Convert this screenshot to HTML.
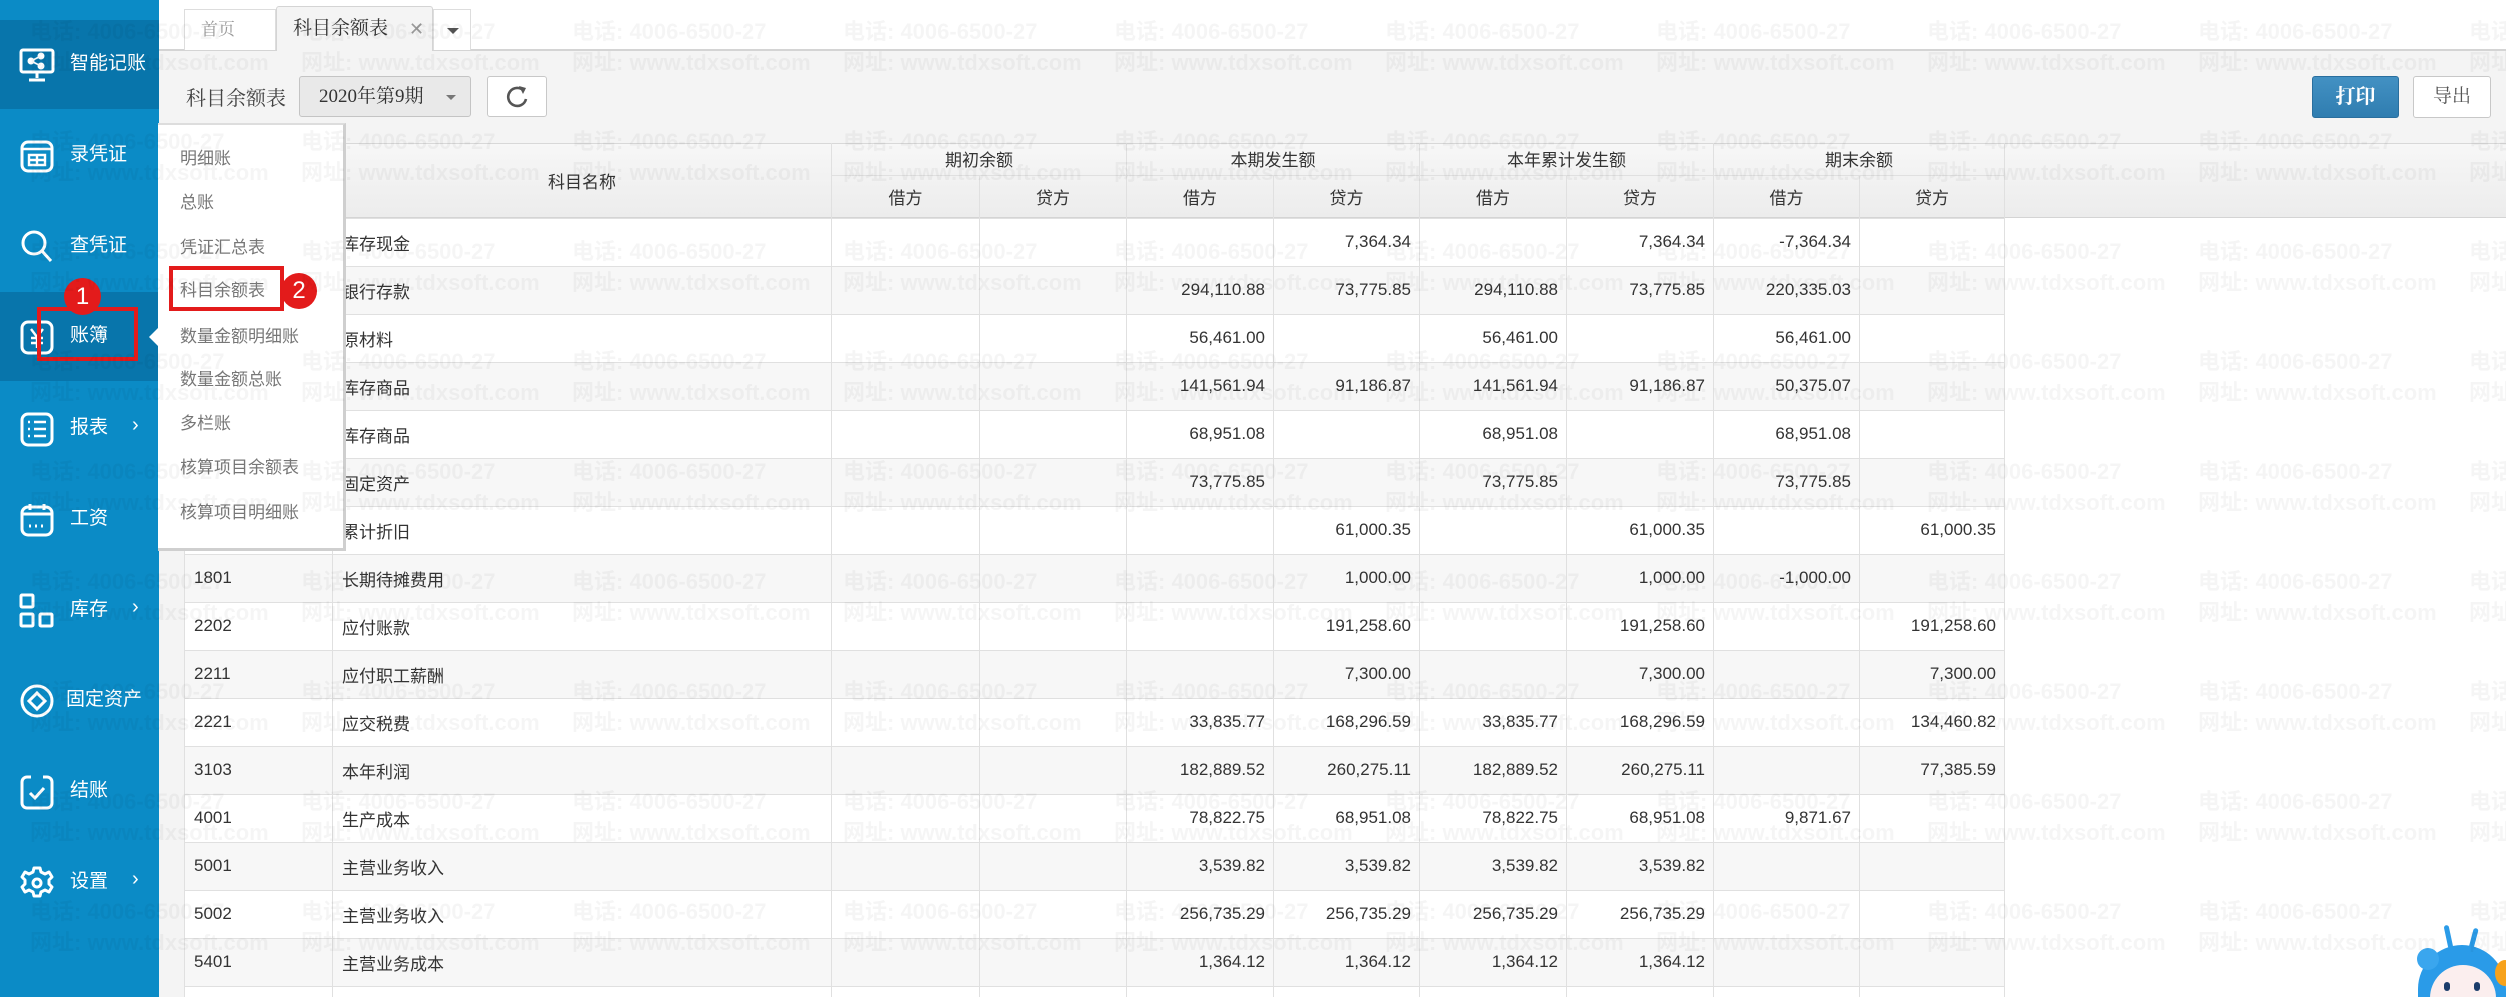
<!DOCTYPE html>
<html><head><meta charset="utf-8">
<style>
*{margin:0;padding:0;box-sizing:border-box}
html,body{width:2506px;height:997px;overflow:hidden;background:#fff;font-family:"Liberation Sans","Noto Sans CJK SC",sans-serif;position:relative}
.abs{position:absolute}
.serif{font-family:"Liberation Serif","Noto Serif CJK SC",serif}
#side{left:0;top:0;width:159px;height:997px;background:#0b8bc6}
.si{position:absolute;left:0;width:159px;height:89px;color:#fff;font-size:19px}
.si.dark{background:#0875ab}
.si svg{position:absolute;left:19px;top:27px}
.si span{position:absolute;left:70px;top:31px;line-height:26px}
.si b{position:absolute;left:132px;top:30px;font-weight:normal;font-size:20px}
#toolbar{left:159px;top:50px;width:2347px;height:93px;background:#f4f4f4;border-top:1px solid #d4d4d4}
#hdr{left:159px;top:143px;width:2347px;height:75px;background:linear-gradient(#f7f7f7,#ececec);border-top:1px solid #d8d8d8;border-bottom:1px solid #d4d4d4}
#lefts{left:159px;top:218px;width:25px;height:779px;background:#f4f4f4}
table{position:absolute;left:184px;top:143px;border-collapse:collapse;table-layout:fixed;font-size:17px;color:#333}
td,th{border:1px solid #e0e0e0;white-space:nowrap;overflow:hidden}
th{font-weight:normal;color:#333;font-size:17px}
tbody td{height:48px;text-align:right;padding-right:8px}
tbody td.c{text-align:left;padding-left:9px}
tbody tr:nth-child(even) td{background:#f7f7f7}
tbody tr:nth-child(odd) td{background:#fff}
#menu{left:158px;top:123px;width:188px;height:428px;background:#fff;border:3px solid #cfcfcf;border-left:none;border-top:2px solid #ddd}
#menu div{position:absolute;left:22px;font-size:17px;color:#777;line-height:22px}
.wm{position:absolute;left:30px;white-space:nowrap;font-size:22px;font-weight:bold;color:rgba(0,0,0,0.04);line-height:31px;pointer-events:none}
.wm span{display:inline-block;width:271px}
.btn{position:absolute;border:1px solid #c8c8c8;border-radius:3px;background:#fff}
</style></head><body>

<div class="abs" style="left:159px;top:49px;width:2347px;height:1px;background:#d4d4d4"></div>
<div class="abs serif" style="left:184px;top:9px;width:92px;height:41px;border:1px solid #ddd;border-bottom:none;background:#fff;color:#999;font-size:17px;line-height:40px;padding-left:16px">首页</div>
<div class="abs serif" style="left:276px;top:6px;width:157px;height:45px;border:1px solid #d4d4d4;border-bottom:none;background:#f4f4f4;border-radius:3px 3px 0 0;color:#333;font-size:19px;line-height:44px;padding-left:16px;z-index:2">科目余额表<span style="position:absolute;left:132px;color:#999;font-size:18px;font-family:'Liberation Sans'">✕</span></div>
<div class="abs" style="left:433px;top:9px;width:38px;height:41px;border:1px solid #ddd;border-bottom:none;background:#fff"><div style="position:absolute;left:13px;top:18px;border-left:6px solid transparent;border-right:6px solid transparent;border-top:6px solid #555"></div></div>

<div id="toolbar" class="abs"></div>
<div class="abs serif" style="left:186px;top:82px;font-size:20px;color:#444">科目余额表</div>
<div class="btn serif" style="left:299px;top:76px;width:172px;height:41px;background:#e9e9e9;border-color:#c4c4c4;font-size:19px;color:#333;line-height:40px;padding-left:19px">2020年第9期<div style="position:absolute;left:146px;top:18px;border-left:5px solid transparent;border-right:5px solid transparent;border-top:5px solid #777"></div></div>
<div class="btn" style="left:487px;top:76px;width:60px;height:41px">
<svg width="60" height="41" viewBox="0 0 60 41"><path d="M36 14 A9 9 0 1 0 38 22" fill="none" stroke="#555" stroke-width="2.6"/><path d="M31 9 L38 11 L35 17 Z" fill="#555"/></svg></div>
<div class="btn serif" style="left:2312px;top:76px;width:87px;height:42px;background:linear-gradient(#4391c3,#2f7db0);border-color:#2a6f9e;color:#fff;font-size:20px;font-weight:bold;line-height:40px;text-align:center">打印</div>
<div class="btn serif" style="left:2413px;top:76px;width:78px;height:42px;color:#555;font-size:19px;line-height:40px;text-align:center">导出</div>

<div id="hdr" class="abs"></div>
<div id="lefts" class="abs"></div>

<table>
<colgroup><col style="width:148px"><col style="width:499px"><col style="width:148px"><col style="width:147px"><col style="width:147px"><col style="width:146px"><col style="width:147px"><col style="width:147px"><col style="width:146px"><col style="width:145px"></colgroup>
<thead>
<tr style="height:32px"><th rowspan="2" style="border-top:none">科目编码</th><th rowspan="2" style="border-top:none">科目名称</th><th colspan="2" style="border-top:none">期初余额</th><th colspan="2" style="border-top:none">本期发生额</th><th colspan="2" style="border-top:none">本年累计发生额</th><th colspan="2" style="border-top:none">期末余额</th></tr>
<tr style="height:43px"><th>借方</th><th>贷方</th><th>借方</th><th>贷方</th><th>借方</th><th>贷方</th><th>借方</th><th>贷方</th></tr>
</thead>
<tbody>
<tr><td class="c">1001</td><td class="c">库存现金</td><td></td><td></td><td></td><td>7,364.34</td><td></td><td>7,364.34</td><td>-7,364.34</td><td></td></tr>
<tr><td class="c">1002</td><td class="c">银行存款</td><td></td><td></td><td>294,110.88</td><td>73,775.85</td><td>294,110.88</td><td>73,775.85</td><td>220,335.03</td><td></td></tr>
<tr><td class="c">1403</td><td class="c">原材料</td><td></td><td></td><td>56,461.00</td><td></td><td>56,461.00</td><td></td><td>56,461.00</td><td></td></tr>
<tr><td class="c">1405</td><td class="c">库存商品</td><td></td><td></td><td>141,561.94</td><td>91,186.87</td><td>141,561.94</td><td>91,186.87</td><td>50,375.07</td><td></td></tr>
<tr><td class="c">1405</td><td class="c">库存商品</td><td></td><td></td><td>68,951.08</td><td></td><td>68,951.08</td><td></td><td>68,951.08</td><td></td></tr>
<tr><td class="c">1601</td><td class="c">固定资产</td><td></td><td></td><td>73,775.85</td><td></td><td>73,775.85</td><td></td><td>73,775.85</td><td></td></tr>
<tr><td class="c">1602</td><td class="c">累计折旧</td><td></td><td></td><td></td><td>61,000.35</td><td></td><td>61,000.35</td><td></td><td>61,000.35</td></tr>
<tr><td class="c">1801</td><td class="c">长期待摊费用</td><td></td><td></td><td></td><td>1,000.00</td><td></td><td>1,000.00</td><td>-1,000.00</td><td></td></tr>
<tr><td class="c">2202</td><td class="c">应付账款</td><td></td><td></td><td></td><td>191,258.60</td><td></td><td>191,258.60</td><td></td><td>191,258.60</td></tr>
<tr><td class="c">2211</td><td class="c">应付职工薪酬</td><td></td><td></td><td></td><td>7,300.00</td><td></td><td>7,300.00</td><td></td><td>7,300.00</td></tr>
<tr><td class="c">2221</td><td class="c">应交税费</td><td></td><td></td><td>33,835.77</td><td>168,296.59</td><td>33,835.77</td><td>168,296.59</td><td></td><td>134,460.82</td></tr>
<tr><td class="c">3103</td><td class="c">本年利润</td><td></td><td></td><td>182,889.52</td><td>260,275.11</td><td>182,889.52</td><td>260,275.11</td><td></td><td>77,385.59</td></tr>
<tr><td class="c">4001</td><td class="c">生产成本</td><td></td><td></td><td>78,822.75</td><td>68,951.08</td><td>78,822.75</td><td>68,951.08</td><td>9,871.67</td><td></td></tr>
<tr><td class="c">5001</td><td class="c">主营业务收入</td><td></td><td></td><td>3,539.82</td><td>3,539.82</td><td>3,539.82</td><td>3,539.82</td><td></td><td></td></tr>
<tr><td class="c">5002</td><td class="c">主营业务收入</td><td></td><td></td><td>256,735.29</td><td>256,735.29</td><td>256,735.29</td><td>256,735.29</td><td></td><td></td></tr>
<tr><td class="c">5401</td><td class="c">主营业务成本</td><td></td><td></td><td>1,364.12</td><td>1,364.12</td><td>1,364.12</td><td>1,364.12</td><td></td><td></td></tr>
<tr><td class="c"></td><td class="c"></td><td></td><td></td><td></td><td></td><td></td><td></td><td></td><td></td></tr>
</tbody>
</table>

<div id="side" class="abs">
<div class="si dark" style="top:20px"><svg width="36" height="36" viewBox="0 0 36 36" fill="none" stroke="#fff" stroke-width="3"><rect x="2" y="3" width="32" height="22" rx="2"/><path d="M18 25v6M10 33h16"/><circle cx="12" cy="14" r="2" fill="#fff"/><circle cx="22" cy="9" r="2" fill="#fff"/><circle cx="22" cy="19" r="2" fill="#fff"/><path d="M12 14l10-5M12 14l10 5" stroke-width="1.6"/></svg><span>智能记账</span></div>
<div class="si" style="top:111px"><svg width="36" height="36" viewBox="0 0 36 36" fill="none" stroke="#fff" stroke-width="3"><rect x="3" y="4" width="30" height="29" rx="6"/><path d="M3 11h30M10 17h16v10H10zM10 22h16M18 17v10" stroke-width="2.4"/></svg><span>录凭证</span></div>
<div class="si" style="top:202px"><svg width="36" height="36" viewBox="0 0 36 36" fill="none" stroke="#fff" stroke-width="3"><circle cx="15" cy="14" r="11"/><path d="M23 22l9 10"/></svg><span>查凭证</span></div>
<div class="si dark" style="top:292px"><svg width="36" height="36" viewBox="0 0 36 36" fill="none" stroke="#fff" stroke-width="3"><rect x="3" y="3" width="30" height="31" rx="6"/><path d="M12 10l6 8 6-8M18 18v11M12 19h12M12 24h12" stroke-width="2.4"/></svg><span>账簿</span></div>
<div class="si" style="top:384px"><svg width="36" height="36" viewBox="0 0 36 36" fill="none" stroke="#fff" stroke-width="3"><rect x="3" y="3" width="30" height="31" rx="6"/><path d="M9 11h2M15 11h12M9 18h2M15 18h12M9 25h2M15 25h12" stroke-width="2.4"/></svg><span>报表</span><b>›</b></div>
<div class="si" style="top:475px"><svg width="36" height="36" viewBox="0 0 36 36" fill="none" stroke="#fff" stroke-width="3"><rect x="3" y="5" width="30" height="28" rx="6"/><path d="M3 12h30M11 2v6M25 2v6"/><path d="M10 24h2M16 24h2M22 24h2" stroke-width="3"/></svg><span>工资</span></div>
<div class="si" style="top:566px"><svg width="36" height="36" viewBox="0 0 36 36" fill="none" stroke="#fff" stroke-width="3"><rect x="2" y="2" width="12" height="12" rx="1"/><rect x="2" y="21" width="12" height="12" rx="1"/><rect x="21" y="21" width="12" height="12" rx="1"/></svg><span>库存</span><b>›</b></div>
<div class="si" style="top:656px"><svg width="36" height="36" viewBox="0 0 36 36" fill="none" stroke="#fff" stroke-width="3"><circle cx="18" cy="18" r="15"/><path d="M18 10l8 8-8 8-8-8z"/></svg><span style="left:66px">固定资产</span></div>
<div class="si" style="top:747px"><svg width="36" height="36" viewBox="0 0 36 36" fill="none" stroke="#fff" stroke-width="3"><path d="M12 3H8a5 5 0 0 0-5 5v21a5 5 0 0 0 5 5h20a5 5 0 0 0 5-5V8a5 5 0 0 0-5-5h-4"/><path d="M11 19l5 5 9-10"/></svg><span>结账</span></div>
<div class="si" style="top:838px"><svg width="36" height="36" viewBox="0 0 36 36" fill="none" stroke="#fff" stroke-width="3"><path d="M15 3h6l1 4 4 2 4-2 3 5-3 3v4l3 3-3 5-4-2-4 2-1 4h-6l-1-4-4-2-4 2-3-5 3-3v-4l-3-3 3-5 4 2 4-2z" stroke-linejoin="round"/><circle cx="18" cy="18" r="4"/></svg><span>设置</span><b>›</b></div>
</div>
<div class="abs" style="left:149px;top:327px;border-top:10px solid transparent;border-bottom:10px solid transparent;border-right:10px solid #fff;z-index:5"></div>

<div id="menu" class="abs" style="z-index:5">
<div style="top:23px">明细账</div>
<div style="top:67px">总账</div>
<div style="top:112px">凭证汇总表</div>
<div style="top:155px">科目余额表</div>
<div style="top:201px">数量金额明细账</div>
<div style="top:244px">数量金额总账</div>
<div style="top:288px">多栏账</div>
<div style="top:332px">核算项目余额表</div>
<div style="top:377px">核算项目明细账</div>
</div>

<div class="abs" style="left:169px;top:266px;width:115px;height:45px;border:4px solid #e31b1b;z-index:6"></div>
<div class="abs" style="left:281px;top:273px;width:36px;height:36px;border-radius:50%;background:#e31b1b;color:#fff;font-size:24px;line-height:36px;text-align:center;z-index:6">2</div>
<div class="abs" style="left:37px;top:307px;width:101px;height:54px;border:4px solid #e31b1b;z-index:6"></div>
<div class="abs" style="left:64px;top:278px;width:37px;height:37px;border-radius:50%;background:#e31b1b;color:#fff;font-size:24px;line-height:37px;text-align:center;z-index:6">1</div>

<div class="abs" style="left:2418px;top:945px;width:88px;height:70px;border-radius:45px 45px 0 0;background:#2a9be8;z-index:7"></div>
<div class="abs" style="left:2417px;top:948px;width:22px;height:22px;border-radius:50%;background:#3aa6ee;z-index:7"></div>
<div class="abs" style="left:2446px;top:925px;width:5px;height:24px;background:#2a9be8;border-radius:3px;transform:rotate(-12deg);z-index:7"></div>
<div class="abs" style="left:2471px;top:928px;width:5px;height:22px;background:#2a9be8;border-radius:3px;transform:rotate(15deg);z-index:7"></div>
<div class="abs" style="left:2430px;top:965px;width:66px;height:50px;border-radius:33px 33px 0 0;background:#fbeeee;z-index:7"></div>
<div class="abs" style="left:2444px;top:982px;width:6px;height:9px;border-radius:3px;background:#1b3d6b;z-index:8"></div>
<div class="abs" style="left:2474px;top:982px;width:6px;height:9px;border-radius:3px;background:#1b3d6b;z-index:8"></div>
<div class="abs" style="left:2495px;top:960px;width:20px;height:26px;border-radius:50%;background:#f7a21b;z-index:7"></div>

<div style="position:absolute;left:0;top:0;width:2506px;height:997px;z-index:20;pointer-events:none">
<div class="wm" style="top:16px"><span>电话: 4006-6500-27<br>网址: www.tdxsoft.com</span><span>电话: 4006-6500-27<br>网址: www.tdxsoft.com</span><span>电话: 4006-6500-27<br>网址: www.tdxsoft.com</span><span>电话: 4006-6500-27<br>网址: www.tdxsoft.com</span><span>电话: 4006-6500-27<br>网址: www.tdxsoft.com</span><span>电话: 4006-6500-27<br>网址: www.tdxsoft.com</span><span>电话: 4006-6500-27<br>网址: www.tdxsoft.com</span><span>电话: 4006-6500-27<br>网址: www.tdxsoft.com</span><span>电话: 4006-6500-27<br>网址: www.tdxsoft.com</span><span>电话: 4006-6500-27<br>网址: www.tdxsoft.com</span></div>
<div class="wm" style="top:126px"><span>电话: 4006-6500-27<br>网址: www.tdxsoft.com</span><span>电话: 4006-6500-27<br>网址: www.tdxsoft.com</span><span>电话: 4006-6500-27<br>网址: www.tdxsoft.com</span><span>电话: 4006-6500-27<br>网址: www.tdxsoft.com</span><span>电话: 4006-6500-27<br>网址: www.tdxsoft.com</span><span>电话: 4006-6500-27<br>网址: www.tdxsoft.com</span><span>电话: 4006-6500-27<br>网址: www.tdxsoft.com</span><span>电话: 4006-6500-27<br>网址: www.tdxsoft.com</span><span>电话: 4006-6500-27<br>网址: www.tdxsoft.com</span><span>电话: 4006-6500-27<br>网址: www.tdxsoft.com</span></div>
<div class="wm" style="top:236px"><span>电话: 4006-6500-27<br>网址: www.tdxsoft.com</span><span>电话: 4006-6500-27<br>网址: www.tdxsoft.com</span><span>电话: 4006-6500-27<br>网址: www.tdxsoft.com</span><span>电话: 4006-6500-27<br>网址: www.tdxsoft.com</span><span>电话: 4006-6500-27<br>网址: www.tdxsoft.com</span><span>电话: 4006-6500-27<br>网址: www.tdxsoft.com</span><span>电话: 4006-6500-27<br>网址: www.tdxsoft.com</span><span>电话: 4006-6500-27<br>网址: www.tdxsoft.com</span><span>电话: 4006-6500-27<br>网址: www.tdxsoft.com</span><span>电话: 4006-6500-27<br>网址: www.tdxsoft.com</span></div>
<div class="wm" style="top:346px"><span>电话: 4006-6500-27<br>网址: www.tdxsoft.com</span><span>电话: 4006-6500-27<br>网址: www.tdxsoft.com</span><span>电话: 4006-6500-27<br>网址: www.tdxsoft.com</span><span>电话: 4006-6500-27<br>网址: www.tdxsoft.com</span><span>电话: 4006-6500-27<br>网址: www.tdxsoft.com</span><span>电话: 4006-6500-27<br>网址: www.tdxsoft.com</span><span>电话: 4006-6500-27<br>网址: www.tdxsoft.com</span><span>电话: 4006-6500-27<br>网址: www.tdxsoft.com</span><span>电话: 4006-6500-27<br>网址: www.tdxsoft.com</span><span>电话: 4006-6500-27<br>网址: www.tdxsoft.com</span></div>
<div class="wm" style="top:456px"><span>电话: 4006-6500-27<br>网址: www.tdxsoft.com</span><span>电话: 4006-6500-27<br>网址: www.tdxsoft.com</span><span>电话: 4006-6500-27<br>网址: www.tdxsoft.com</span><span>电话: 4006-6500-27<br>网址: www.tdxsoft.com</span><span>电话: 4006-6500-27<br>网址: www.tdxsoft.com</span><span>电话: 4006-6500-27<br>网址: www.tdxsoft.com</span><span>电话: 4006-6500-27<br>网址: www.tdxsoft.com</span><span>电话: 4006-6500-27<br>网址: www.tdxsoft.com</span><span>电话: 4006-6500-27<br>网址: www.tdxsoft.com</span><span>电话: 4006-6500-27<br>网址: www.tdxsoft.com</span></div>
<div class="wm" style="top:566px"><span>电话: 4006-6500-27<br>网址: www.tdxsoft.com</span><span>电话: 4006-6500-27<br>网址: www.tdxsoft.com</span><span>电话: 4006-6500-27<br>网址: www.tdxsoft.com</span><span>电话: 4006-6500-27<br>网址: www.tdxsoft.com</span><span>电话: 4006-6500-27<br>网址: www.tdxsoft.com</span><span>电话: 4006-6500-27<br>网址: www.tdxsoft.com</span><span>电话: 4006-6500-27<br>网址: www.tdxsoft.com</span><span>电话: 4006-6500-27<br>网址: www.tdxsoft.com</span><span>电话: 4006-6500-27<br>网址: www.tdxsoft.com</span><span>电话: 4006-6500-27<br>网址: www.tdxsoft.com</span></div>
<div class="wm" style="top:676px"><span>电话: 4006-6500-27<br>网址: www.tdxsoft.com</span><span>电话: 4006-6500-27<br>网址: www.tdxsoft.com</span><span>电话: 4006-6500-27<br>网址: www.tdxsoft.com</span><span>电话: 4006-6500-27<br>网址: www.tdxsoft.com</span><span>电话: 4006-6500-27<br>网址: www.tdxsoft.com</span><span>电话: 4006-6500-27<br>网址: www.tdxsoft.com</span><span>电话: 4006-6500-27<br>网址: www.tdxsoft.com</span><span>电话: 4006-6500-27<br>网址: www.tdxsoft.com</span><span>电话: 4006-6500-27<br>网址: www.tdxsoft.com</span><span>电话: 4006-6500-27<br>网址: www.tdxsoft.com</span></div>
<div class="wm" style="top:786px"><span>电话: 4006-6500-27<br>网址: www.tdxsoft.com</span><span>电话: 4006-6500-27<br>网址: www.tdxsoft.com</span><span>电话: 4006-6500-27<br>网址: www.tdxsoft.com</span><span>电话: 4006-6500-27<br>网址: www.tdxsoft.com</span><span>电话: 4006-6500-27<br>网址: www.tdxsoft.com</span><span>电话: 4006-6500-27<br>网址: www.tdxsoft.com</span><span>电话: 4006-6500-27<br>网址: www.tdxsoft.com</span><span>电话: 4006-6500-27<br>网址: www.tdxsoft.com</span><span>电话: 4006-6500-27<br>网址: www.tdxsoft.com</span><span>电话: 4006-6500-27<br>网址: www.tdxsoft.com</span></div>
<div class="wm" style="top:896px"><span>电话: 4006-6500-27<br>网址: www.tdxsoft.com</span><span>电话: 4006-6500-27<br>网址: www.tdxsoft.com</span><span>电话: 4006-6500-27<br>网址: www.tdxsoft.com</span><span>电话: 4006-6500-27<br>网址: www.tdxsoft.com</span><span>电话: 4006-6500-27<br>网址: www.tdxsoft.com</span><span>电话: 4006-6500-27<br>网址: www.tdxsoft.com</span><span>电话: 4006-6500-27<br>网址: www.tdxsoft.com</span><span>电话: 4006-6500-27<br>网址: www.tdxsoft.com</span><span>电话: 4006-6500-27<br>网址: www.tdxsoft.com</span><span>电话: 4006-6500-27<br>网址: www.tdxsoft.com</span></div>
</div>
</body></html>
